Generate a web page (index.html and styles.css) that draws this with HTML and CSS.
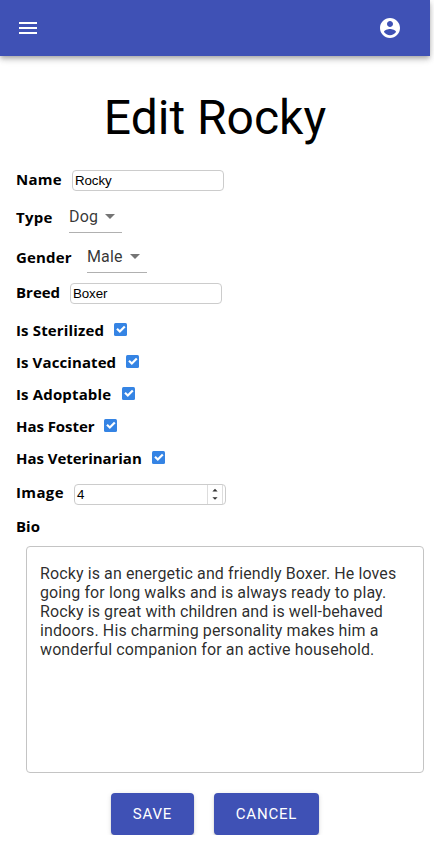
FILE: index.html
```html
<!DOCTYPE html>
<html lang="en">
<head>
<meta charset="utf-8">
<title>Edit Rocky</title>
<link rel="stylesheet" href="styles.css">
</head>
<body>
<header class="toolbar">
  <svg class="icon" viewBox="0 0 24 24"><path d="M3 18h18v-2H3v2zm0-5h18v-2H3v2zm0-7v2h18V6H3z"/></svg>
  <svg class="icon" viewBox="0 0 24 24"><path d="M12 2C6.480 2 2 6.480 2 12s4.480 10 10 10 10-4.480 10-10S17.520 2 12 2zm0 3c1.660 0 3 1.340 3 3s-1.340 3-3 3-3-1.340-3-3 1.340-3 3-3zm0 14.200c-2.500 0-4.710-1.280-6-3.220.030-1.990 4-3.080 6-3.080 1.990 0 5.970 1.090 6 3.080-1.290 1.940-3.500 3.220-6 3.220z"/></svg>
</header>
<main class="content">
  <h1 class="title">Edit Rocky</h1>
  <form class="form">
    <div class="row row-name"><span class="label w-name">Name</span><span class="input">Rocky</span></div>
    <div class="row row-type"><span class="label w-type">Type</span><span class="select select-dog">Dog<i class="arrow"></i></span></div>
    <div class="row row-gender"><span class="label w-gender">Gender</span><span class="select select-male">Male<i class="arrow"></i></span></div>
    <div class="row row-breed"><span class="label w-breed">Breed</span><span class="input">Boxer</span></div>
    <div class="row"><span class="label w-ster">Is Sterilized</span><svg class="check" viewBox="0 0 13 13"><rect width="13" height="13" rx="1.500"/><path d="M3 5.800L5.800 8.500L10.800 3.500"/></svg></div>
    <div class="row"><span class="label w-vacc">Is Vaccinated</span><svg class="check" viewBox="0 0 13 13"><rect width="13" height="13" rx="1.500"/><path d="M3 5.800L5.800 8.500L10.800 3.500"/></svg></div>
    <div class="row"><span class="label w-adopt">Is Adoptable</span><svg class="check" viewBox="0 0 13 13"><rect width="13" height="13" rx="1.500"/><path d="M3 5.800L5.800 8.500L10.800 3.500"/></svg></div>
    <div class="row"><span class="label w-foster">Has Foster</span><svg class="check" viewBox="0 0 13 13"><rect width="13" height="13" rx="1.500"/><path d="M3 5.800L5.800 8.500L10.800 3.500"/></svg></div>
    <div class="row"><span class="label w-vet">Has Veterinarian</span><svg class="check" viewBox="0 0 13 13"><rect width="13" height="13" rx="1.500"/><path d="M3 5.800L5.800 8.500L10.800 3.500"/></svg></div>
    <div class="row row-image"><span class="label w-image">Image</span><span class="input number">4<svg class="spinner" viewBox="0 0 16 20"><path d="M5 6.500L8 3.500L11 6.500zM5 13L8 16L11 13z"/></svg></span></div>
    <div class="row"><span class="label">Bio</span></div>
    <div class="bio">Rocky is an energetic and friendly Boxer. He loves going for long walks and is always ready to play. Rocky is great with children and is well-behaved indoors. His charming personality makes him a wonderful companion for an active household.</div>
    <div class="actions"><button class="button save" type="button">SAVE</button><button class="button cancel" type="button">CANCEL</button></div>
  </form>
</main>
</body>
</html>
```
FILE: styles.css
```css
* { box-sizing: border-box; }
body { margin: 0; background: #fff; font-family: Roboto, sans-serif; overflow: hidden; }
.toolbar {
  width: 430px; height: 56px; padding: 0 28px 0 16px;
  display: flex; align-items: center; justify-content: space-between;
  background: #3f51b5;
  box-shadow: 0 2px 4px -1px rgba(0,0,0,.2), 0 4px 5px rgba(0,0,0,.14), 0 1px 10px rgba(0,0,0,.12);
}
.icon { width: 24px; height: 24px; fill: #fff; }
.content { width: 430px; }
.title { margin: 0; height: 108px; padding-top: 34px; font-size: 48px; line-height: 56px; font-weight: 400; text-align: center; color: #000; }
.row { height: 32px; padding-left: 16px; display: flex; align-items: center; }
.row-type { height: 42px; }
.row-gender { height: 38px; }
.row-breed { height: 34px; margin-bottom: 4px; }
.row-image { height: 34px; margin-top: 2px; }
.label { font: 700 15px/22px "Open Sans", sans-serif; color: #000; white-space: nowrap; }
.row-name .label, .row-breed .label, .row-image .label { padding-bottom: 2px; }
.w-name { width: 56px; letter-spacing: .25px; }
.w-type { width: 53px; letter-spacing: .25px; }
.w-gender { width: 71px; letter-spacing: .15px; }
.w-breed { width: 54px; }
.w-ster { width: 98px; letter-spacing: .15px; }
.w-vacc { width: 110px; letter-spacing: .1px; }
.w-adopt { width: 106px; letter-spacing: .15px; }
.w-foster { width: 88px; letter-spacing: -.05px; }
.w-vet { width: 136px; letter-spacing: -.05px; }
.w-image { width: 58px; letter-spacing: .35px; }
.input {
  width: 152px; height: 21px; margin-top: 1px; padding: 0 0 0 2px;
  border: 1px solid #ccc; border-radius: 4px;
  font: 13.333px/20px "Liberation Sans", Arial, sans-serif; letter-spacing: -.1px; color: #000;
}
.number { display: flex; justify-content: space-between; margin-top: 2px; }
.spinner { width: 16px; height: 19px; margin-right: 2px; border: 1px solid #ddd; border-width: 0 1px; fill: #333; }
.select {
  height: 32px; display: flex; align-items: center; justify-content: space-between;
  padding: 0 7px 1px 0; border-bottom: 1px solid #949494;
  border-bottom-color: #b0b0b0;
  font-size: 16px; line-height: 19px; letter-spacing: .15px; color: rgba(0,0,0,.8);
}
.select-dog { width: 53px; }
.select-male { width: 60px; }
.arrow { width: 0; height: 0; border: 5px solid transparent; border-top-color: #757575; border-bottom: 0; margin-top: 1px; }
.check { width: 13px; height: 13px; margin-top: -1px; }
.check rect { fill: #3584e4; }
.check path { fill: none; stroke: #fff; stroke-width: 2.200; }
.bio {
  width: 398px; height: 227px; margin: 4px 0 0 26px; padding: 17px 13px;
  border: 1px solid #c4c4c4; border-radius: 4px;
  font-size: 16px; line-height: 19px; letter-spacing: .11px; color: rgba(0,0,0,.84);
}
.actions { display: flex; justify-content: center; gap: 20px; margin-top: 20px; }
.button {
  height: 42px; padding: 0; border: 0; border-radius: 4px; background: #3f51b5; color: #fff;
  font: 400 15px/26px Roboto, sans-serif; letter-spacing: .8px;
  box-shadow: 0 3px 1px -2px rgba(0,0,0,.2), 0 2px 2px rgba(0,0,0,.14), 0 1px 5px rgba(0,0,0,.12);
}
.save { width: 83px; }
.cancel { width: 105px; }
```
